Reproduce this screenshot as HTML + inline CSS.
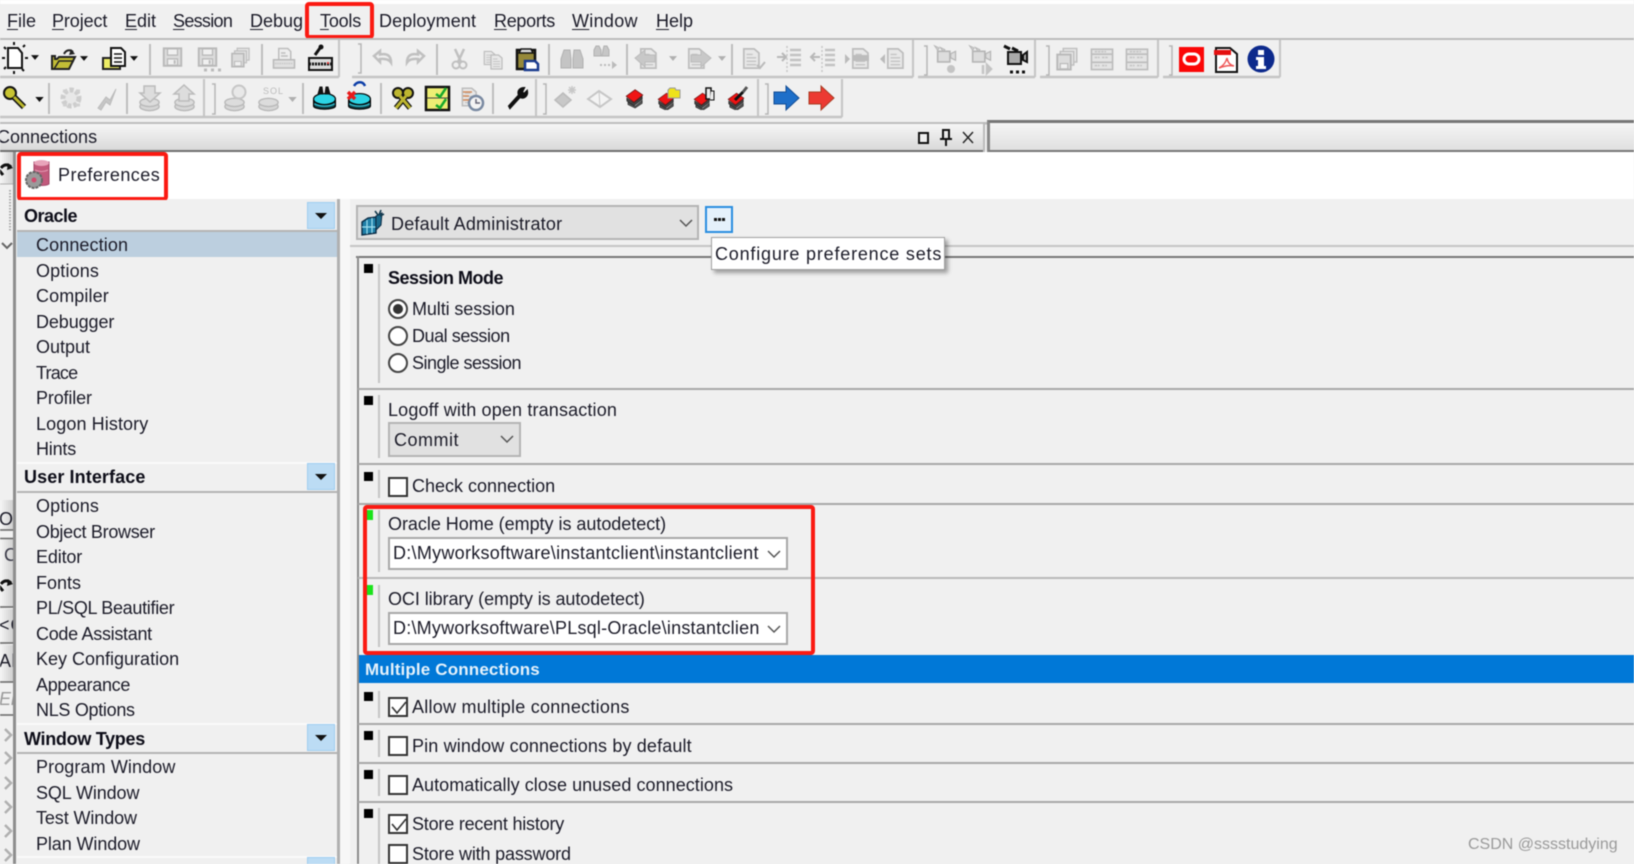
<!DOCTYPE html>
<html><head><meta charset="utf-8"><title>Preferences</title>
<style>
html,body{margin:0;padding:0;background:#f0f0f0}
#r{position:relative;width:1634px;height:864px;overflow:hidden;background:#f0f0f0;font-family:"Liberation Sans",Arial,sans-serif;font-size:18px;color:#1b1b28;filter:blur(.45px)}
#r div,#r svg.a{position:absolute}
.t{white-space:nowrap;line-height:24px;height:24px}
.b{font-weight:bold;color:#0d0d18}
.u{text-decoration:underline;text-underline-offset:2px;text-decoration-thickness:1px}
.h{left:17px;width:320px;height:31px;background:#f0f0f0;border-bottom:2px solid #b4b4b4;box-sizing:border-box}
.dd{left:307px;width:28px;height:27px;background:#bcdcf4;border:1px solid #9fcdf0;box-sizing:border-box}
.dd:after{content:"";position:absolute;left:7px;top:10px;border-left:6px solid transparent;border-right:6px solid transparent;border-top:6px solid #111}
.sq{left:364px;width:9px;height:9px;background:#000}
.gr{left:367px;width:6px;height:10px;background:#1be31b}
.vs{left:378px;width:2px;background:#c4c4c4}
.hl{left:358px;right:0;height:2px;background:#a8a8a8}
.rd{left:388px;width:16px;height:16px;border:2px solid #444;border-radius:50%;background:#fff}
.rd.on:after{content:"";position:absolute;left:3px;top:3px;width:10px;height:10px;border-radius:50%;background:#333}
.cb{left:388px;width:16px;height:16px;border:2px solid #333;background:#fff}
.red{border:4px solid #fb1a12;border-radius:4px;box-sizing:border-box}
.inp{left:388px;width:400px;height:33px;background:#fff;border:2px solid #a8a8a8;box-sizing:border-box}
.sb{position:absolute;left:0;width:13px;background:linear-gradient(90deg,#f6f6f6,#cfcfcf)}
</style></head><body><div id="r">

<div style="left:0;top:0;width:1634px;height:4px;background:#fff"></div>
<div class="t" style="left:7px;top:9px"><span class="u">F</span>ile</div>
<div class="t" style="left:52px;top:9px;letter-spacing:-.1px"><span class="u">P</span>roject</div>
<div class="t" style="left:125px;top:9px"><span class="u">E</span>dit</div>
<div class="t" style="left:173px;top:9px;letter-spacing:-.7px"><span class="u">S</span>ession</div>
<div class="t" style="left:250px;top:9px"><span class="u">D</span>ebug</div>
<div class="t" style="left:320px;top:9px;letter-spacing:-.2px"><span class="u">T</span>ools</div>
<div class="t" style="left:379px;top:9px;letter-spacing:.1px">Deployment</div>
<div class="t" style="left:494px;top:9px;letter-spacing:-.3px"><span class="u">R</span>eports</div>
<div class="t" style="left:572px;top:9px;letter-spacing:.3px"><span class="u">W</span>indow</div>
<div class="t" style="left:656px;top:9px"><span class="u">H</span>elp</div>
<div class="red" style="left:305px;top:2px;width:69px;height:37px"></div>

<svg class="a" style="left:0;top:0" width="1634" height="152" viewBox="0 0 1634 152">
<defs>
<symbol id="floppy" viewBox="0 0 32 32"><path d="M2 2h28v28H2z" fill="#dcdcdc" stroke="#b8b8b8" stroke-width="3"/><path d="M8 3h16v10H8zM8 19h16v10H8z" fill="#f0f0f0" stroke="#b8b8b8" stroke-width="2"/><path d="M18 21h3v6h-3z" fill="#b8b8b8"/></symbol>
<symbol id="floppies" viewBox="0 0 32 32"><path d="M11 2h18v18H11z" fill="#e8e8e8" stroke="#c0c0c0" stroke-width="2"/><path d="M7 6h18v18H7z" fill="#e8e8e8" stroke="#c0c0c0" stroke-width="2"/><path d="M3 10h18v20H3z" fill="#dcdcdc" stroke="#b8b8b8" stroke-width="2.5"/><path d="M7 22h10v7H7z" fill="#f0f0f0" stroke="#b8b8b8" stroke-width="1.5"/></symbol>
<symbol id="printg" viewBox="0 0 32 32"><path d="M9 2h12l4 4v12H9z" fill="#eee" stroke="#bdbdbd" stroke-width="2"/><path d="M12 8h6M12 12h9" stroke="#bdbdbd" stroke-width="2"/><path d="M2 17h28v11H2z" fill="#e0e0e0" stroke="#b8b8b8" stroke-width="2"/><path d="M4 22h24" stroke="#c8c8c8" stroke-width="2" stroke-dasharray="2 1"/></symbol>
<symbol id="db" viewBox="0 0 32 32"><ellipse cx="16" cy="24" rx="14" ry="6" fill="#d6d6d6" stroke="#b8b8b8" stroke-width="2"/><ellipse cx="16" cy="18" rx="14" ry="6" fill="#dcdcdc" stroke="#b8b8b8" stroke-width="2"/></symbol>
<symbol id="dbc" viewBox="0 0 32 32"><path d="M2 19v8c0 2 6 4 14 4s14-2 14-4v-8z" fill="#0d3c42" stroke="#000" stroke-width="1.5"/><path d="M3 24c3 2 8 3 13 3s10-1 13-3" stroke="#2fb6c8" stroke-width="2" fill="none"/><ellipse cx="16" cy="18" rx="14" ry="7" fill="#2cd4e4" stroke="#000" stroke-width="1.5"/></symbol>
<symbol id="doc" viewBox="0 0 32 32"><path d="M7 2h15l7 6v22H7z" fill="#e8e8e8" stroke="#bdbdbd" stroke-width="2.5"/><path d="M11 10h9M11 15h14M11 20h14M11 25h14" stroke="#c4c4c4" stroke-width="2"/></symbol>
<symbol id="redbk" viewBox="0 0 32 32"><path d="M5 23l12 7 12-10v5L17 33 5 27z" fill="#5a5a5a" stroke="#222"/><path d="M3 16l12 8 14-11v5L15 29 3 21z" fill="#444" stroke="#222"/><path d="M2 13 17 2l13 9-15 12z" fill="#f01414" stroke="#6a1414" stroke-width="1.2"/></symbol>
<symbol id="cam" viewBox="0 0 32 32"><path d="M3 2l6 3-2 3zM10 4l6 3-2 3z" fill="#ccc" stroke="#b5b5b5"/><path d="M7 9h15v13H7z" fill="#ddd" stroke="#b5b5b5" stroke-width="2"/><path d="M23 12l6-3v11l-6-3z" fill="#ddd" stroke="#b5b5b5" stroke-width="1.5"/></symbol>
<symbol id="win" viewBox="0 0 32 32"><rect x="3" y="4" width="26" height="25" fill="#e4e4e4" stroke="#bcbcbc" stroke-width="2"/><path d="M3 10h26M3 20h26" stroke="#bcbcbc" stroke-width="2"/><path d="M7 14h6M16 14h8M7 24h6M16 24h6M7 7h14" stroke="#c4c4c4" stroke-width="2" stroke-dasharray="3 1"/></symbol>
<symbol id="drp" viewBox="0 0 10 6"><path d="M0 0h10L5 6z" fill="#111"/></symbol>
<symbol id="drg" viewBox="0 0 10 6"><path d="M0 0h10L5 6z" fill="#b0b0b0"/></symbol>
</defs>
<rect y="38" width="1634" height="2" fill="#bcbcbc"/>
<path d="M0 77h339M352 77h561M918 77h117M1040 77h118M1163 77h117" stroke="#c4c4c4" stroke-width="2.5"/>
<path d="M339 40v37M913 40v37M1035 40v37M1158 40v37M1280 40v37" stroke="#c4c4c4" stroke-width="2"/>
<path d="M0 117h842" stroke="#c4c4c4" stroke-width="2.5"/>
<path d="M204 79v38M536 79v38M758 79v38M842 79v38" stroke="#c4c4c4" stroke-width="2"/>
<rect y="122" width="987" height="2.5" fill="#bdbdbd"/>
<path d="M150 44v31M262 44v31M437 44v31M549 44v31M627 44v31M732 44v31M49 83v31M127 83v31M303 83v31M381 83v31M493 83v31" stroke="#bdbdbd" stroke-width="2"/>
<path d="M358 44h3v29h-3M924 46h3v29h-3M1046 46h3v29h-3M1169 46h3v29h-3M212 84h3v30h-3M543 84h3v30h-3M765 84h3v30h-3" fill="none" stroke="#b5b5b5" stroke-width="1.5"/>

<!-- new doc -->
<path d="M8 48h10l4 5v15H8z" fill="#fff" stroke="#111" stroke-width="2"/>
<path d="M14 42v3M14 71v3M2 58h3M25 58h3M25 45l-2 2M4 47l2 2M4 69l2-2M24 71l-2-2" stroke="#111" stroke-width="2"/>
<use href="#drp" x="31" y="55" width="8" height="5"/>
<!-- open -->
<path d="M52 56v13h17l6-12H59l-2 2h-2v-3z" fill="#c2bd36" stroke="#222" stroke-width="2"/><path d="M54 69l5-8h15" fill="none" stroke="#222" stroke-width="1.5"/>
<path d="M64 54c2-4 6-5 9-2" fill="none" stroke="#222" stroke-width="2"/><path d="M71 49l4 5-6 1z" fill="#222"/>
<use href="#drp" x="80" y="56" width="8" height="5"/>
<!-- doc folder -->
<path d="M103 58h17v11h-17z" fill="#eeee66" stroke="#222" stroke-width="2"/><path d="M111 48h10l4 4v14h-14z" fill="#fff" stroke="#111" stroke-width="2"/><path d="M114 54h8M114 58h8M114 62h8" stroke="#111" stroke-width="1.5"/>
<use href="#drp" x="130" y="56" width="8" height="5"/>
<use href="#floppy" x="162" y="47" width="21" height="20"/>
<use href="#floppy" x="197" y="47" width="21" height="20"/>
<path d="M204 70h3M211 70h3M218 70h3" stroke="#bbb" stroke-width="3"/>
<use href="#floppies" x="230" y="47" width="21" height="21"/>
<use href="#printg" x="272" y="47" width="24" height="24"/>
<!-- print setup -->
<path d="M309 58h23v12h-23z" fill="#dcdcdc" stroke="#111" stroke-width="2"/><path d="M309 64h23" stroke="#111" stroke-width="3" stroke-dasharray="2 1"/><path d="M315 55l5-7" stroke="#111" stroke-width="3"/><circle cx="321" cy="47" r="2.5" fill="#111"/><circle cx="328" cy="63" r="1" fill="#e22"/>
<!-- undo redo -->
<path d="M374 56l6-5v3.500c7-1.500 11 1 11 8-2-3-6-4-11-3.500v3z" fill="none" stroke="#c0c0c0" stroke-width="2.5"/>
<path d="M424 56l-6-5v3.500c-7-1.500-11 1-11 8 2-3 6-4 11-3.500v3z" fill="none" stroke="#c0c0c0" stroke-width="2.5"/>
<!-- scissors -->
<path d="M455 49l6 13M464 49l-6 13" stroke="#c0c0c0" stroke-width="2.5"/><circle cx="456" cy="65" r="3.500" fill="none" stroke="#c0c0c0" stroke-width="2"/><circle cx="463" cy="65" r="3.500" fill="none" stroke="#c0c0c0" stroke-width="2"/>
<use href="#doc" x="481" y="50" width="15" height="16"/><use href="#doc" x="487" y="54" width="17" height="16"/>
<!-- paste -->
<path d="M517 50h18v19h-18z" fill="#96893a" stroke="#111" stroke-width="2.500"/><path d="M521 49h10l2 4h-14z" fill="#ddd" stroke="#111" stroke-width="1.500"/><path d="M525 61h10l3 3v6h-13z" fill="#fff" stroke="#1a3b8e" stroke-width="2.500"/>
<!-- binoc -->
<path d="M561 59l3-9h6l1 9v9h-10zM573 59l1-9h6l3 9v9h-10z" fill="#c4c4c4" stroke="#b0b0b0"/>
<path d="M594 50l2-4h3l2 4v6h-7zM603 50l1-4h3l2 4v6h-7z" fill="#c6c6c6" stroke="#b0b0b0"/><path d="M600 65h12" stroke="#bbb" stroke-width="2" stroke-dasharray="2 2"/><path d="M612 61l5 4-5 4z" fill="#bbb"/>
<!-- back fwd -->
<use href="#doc" x="636" y="47" width="22" height="23"/><path d="M635 58l10-8v5h10v7h-10v5z" fill="#c8c8c8" stroke="#bbb"/>
<use href="#drg" x="669" y="56" width="8" height="5"/>
<use href="#doc" x="684" y="47" width="22" height="23"/><path d="M711 58l-10-8v5h-10v7h10v5z" fill="#c8c8c8" stroke="#bbb"/>
<use href="#drg" x="718" y="56" width="8" height="5"/>
<use href="#doc" x="739" y="47" width="22" height="23"/><path d="M757 65l3 3 5-6" fill="none" stroke="#bbb" stroke-width="2"/>
<path d="M787 46v26" stroke="#c6c6c6" stroke-width="1.500" stroke-dasharray="2 2"/><path d="M790 50h11M790 55h11M790 60h11M790 65h11" stroke="#c2c2c2" stroke-width="2.500"/><path d="M777 57h8M782 53l4 4-4 4" fill="none" stroke="#b8b8b8" stroke-width="2"/>
<path d="M822 46v26" stroke="#c6c6c6" stroke-width="1.500" stroke-dasharray="2 2"/><path d="M825 50h10M825 55h10M825 60h10M825 65h10" stroke="#c2c2c2" stroke-width="2.500"/><path d="M820 57h-8M815 53l-4 4 4 4" fill="none" stroke="#b8b8b8" stroke-width="2"/>
<use href="#doc" x="848" y="47" width="22" height="23"/><path d="M853 55h16v6h-16z" fill="#bcbcbc"/><path d="M845 54l5 5-5 5z" fill="#bbb"/>
<use href="#doc" x="883" y="47" width="22" height="23"/><path d="M885 54l-5 5 5 5z" fill="#bbb"/>
<!-- cameras -->
<use href="#cam" x="932" y="44" width="26" height="26"/><circle cx="951" cy="69" r="4" fill="#c4c4c4"/>
<use href="#cam" x="967" y="44" width="26" height="26"/><path d="M983 65v9M987 65l4 4-4 4z" stroke="#c4c4c4" stroke-width="2.500" fill="#c4c4c4"/>
<path d="M1004 46l6 3M1012 48l6 3" stroke="#111" stroke-width="3"/><path d="M1008 52h13v12h-13zM1023 55l4-3v10l-4-2z" fill="#aaa" stroke="#111" stroke-width="2"/><path d="M1010 72h3M1016 72h3M1022 72h3" stroke="#111" stroke-width="3"/>
<!-- windows -->
<use href="#floppies" x="1055" y="47" width="24" height="24"/>
<use href="#win" x="1089" y="46" width="26" height="26"/>
<use href="#win" x="1124" y="46" width="26" height="26"/>
<!-- oracle -->
<rect x="1179" y="47" width="25" height="25" fill="#fb0606"/><rect x="1184" y="54" width="15" height="10" rx="5" fill="none" stroke="#fff" stroke-width="3"/>
<!-- pdf -->
<path d="M1216 48h14l7 6v18h-21z" fill="#fff" stroke="#111" stroke-width="2"/><rect x="1214" y="50" width="17" height="5" fill="#e41010"/><path d="M1219 68c4-2 7-6 8-10 1 5 3 7 7 8-5-1-10 0-15 2z" fill="none" stroke="#e55" stroke-width="1.500"/>
<!-- info -->
<circle cx="1261" cy="59" r="13.500" fill="#0d2a8c"/><rect x="1258" y="50" width="6" height="5" fill="#fff"/><path d="M1256 57h8v9h2v3h-10v-3h2v-6h-2z" fill="#fff"/>

<!-- row 2 -->
<circle cx="10" cy="93" r="6" fill="#c8c432" stroke="#111" stroke-width="2"/><path d="M14 97l10 10" stroke="#111" stroke-width="6"/><path d="M14 97l10 10" stroke="#bdb82c" stroke-width="3"/>
<use href="#drp" x="35" y="97" width="9" height="5"/>
<circle cx="71" cy="98" r="8" fill="#e8e8e8" stroke="#cdcdcd" stroke-width="5" stroke-dasharray="4 2"/><path d="M63 91h4M76 91h4M63 105h4M76 105h4" stroke="#d0d0d0" stroke-width="3"/>
<path d="M98 108l8-11 4 3 6-11-6 16-4-3-5 8z" fill="#c6c6c6" stroke="#bbb"/>
<use href="#db" x="137" y="90" width="25" height="22"/><path d="M144 86h11v7h5l-10 9-10-9h4z" fill="#ddd" stroke="#bbb" stroke-width="1.500"/>
<use href="#db" x="172" y="90" width="25" height="22"/><path d="M179 101v-7h-5l10-9 10 9h-5v7z" fill="#ddd" stroke="#bbb" stroke-width="1.500"/>
<use href="#db" x="222" y="90" width="25" height="22"/><circle cx="239" cy="92" r="6.500" fill="#e8e8e8" stroke="#c6c6c6" stroke-width="2"/>
<use href="#db" x="256" y="90" width="25" height="22"/><text x="263" y="94" font-family="Liberation Sans,sans-serif" font-size="9" fill="#bbb" letter-spacing="1">SOL</text>
<use href="#drg" x="288" y="97" width="9" height="5"/>
<use href="#dbc" x="312" y="85" width="25" height="25"/><path d="M318 94l2-7h2l1 7zM325 94l1-7h2l2 7z" fill="#111" stroke="#111"/>
<use href="#dbc" x="347" y="85" width="25" height="25"/><path d="M348 92l7 7m0-7l-7 7" stroke="#e81a1a" stroke-width="3.500"/><path d="M354 86c3-5 9-5 11 0" fill="none" stroke="#0c3ea8" stroke-width="2.500"/>
<circle cx="398" cy="93" r="5" fill="#bdb630" stroke="#111" stroke-width="2"/><circle cx="408" cy="93" r="5" fill="#bdb630" stroke="#111" stroke-width="2"/><path d="M400 96l10 12M406 96l-10 12" stroke="#111" stroke-width="5.500"/><path d="M400 96l10 12M406 96l-10 12" stroke="#bdb630" stroke-width="3"/>
<path d="M426 87h23v23h-23z" fill="#eeee74" stroke="#111" stroke-width="2.500"/><path d="M427 98h21" stroke="#444" stroke-width="1"/><path d="M436 94l4 3 6-9M436 105l4 3 6-9" fill="none" stroke="#17a82a" stroke-width="2.500"/>
<use href="#doc" x="458" y="85" width="20" height="24"/><circle cx="476" cy="103" r="7" fill="#f4f4f4" stroke="#7a8aa2" stroke-width="2.500"/><path d="M476 99v4h4" stroke="#667" fill="none" stroke-width="1.500"/><path d="M463 92h9M463 96h6M463 100h6" stroke="#d28a5a" stroke-width="1.500"/>
<path d="M509 106l10-11c-2-4 1-7 5-7l-2 4 2 2 3-3c1 5-3 8-7 6l-10 11z" fill="#111" stroke="#111" stroke-width="2"/>
<path d="M555 100l8-7 8 7-8 7z" fill="#c8c8c8" stroke="#bbb" stroke-width="1.500"/><path d="M572 86v8M568 90h8M569 87l6 6M575 87l-6 6" stroke="#c8c8c8" stroke-width="1.500"/>
<path d="M588 99l11-8 12 8-11 8z" fill="#f4f4f4" stroke="#c6c6c6" stroke-width="2"/><path d="M599 91l1 16" stroke="#c6c6c6" stroke-width="1"/>
<use href="#redbk" x="625" y="87" width="19" height="22"/>
<use href="#redbk" x="657" y="92" width="18" height="18"/><path d="M668 90l2-2h5l1 2h4v8h-12z" fill="#eee21a" stroke="#999"/>
<use href="#redbk" x="693" y="92" width="18" height="18"/><path d="M706 88h5v11h-5z" fill="#eee" stroke="#111" stroke-width="1.500"/><path d="M711 91h3v9h-4" fill="#eee" stroke="#111"/>
<use href="#redbk" x="727" y="92" width="18" height="18"/><path d="M735 100l8-8" stroke="#111" stroke-width="3"/><path d="M743 92l4-5" stroke="#555" stroke-width="3"/>
<path d="M774 92h12v-6l13 12-13 12v-6h-12z" fill="#1e6fc9" stroke="#124c94" stroke-width="1"/>
<path d="M809 92h12v-6l13 12-13 12v-6h-12z" fill="#ec3a32" stroke="#a83c22" stroke-width="1"/>
</svg>

<!-- connections bar -->
<div style="left:0;top:124px;width:983px;height:26px;background:linear-gradient(#f6f6f6,#d9d9d9);border-bottom:2px solid #6f6f6f"></div>
<div style="left:983px;top:122px;width:2px;height:30px;background:#bcbcbc"></div>
<div style="left:987px;top:120px;width:647px;height:32px;box-sizing:border-box;background:linear-gradient(#f5f5f5,#e0e0e0);border-top:3px solid #777;border-left:3px solid #888;border-bottom:2px solid #777"></div>
<div class="t" style="left:-3px;top:125px">Connections</div>
<div style="left:918px;top:132px;width:7px;height:8px;border:2px solid #111;background:#f0f0f0"></div>
<svg class="a" style="left:938px;top:128px" width="40" height="20"><path d="M5 2h6v9H5zM8 11v7M2 11h12" fill="none" stroke="#111" stroke-width="2"/><path d="M25 4l10 11M35 4 25 15" stroke="#222" stroke-width="1.400"/></svg>

<!-- white band -->
<div style="left:16px;top:152px;width:1618px;height:47px;background:#fff"></div>
<svg class="a" style="left:24px;top:158px" width="30" height="32"><path d="M10 4h15v22c-3 2-12 2-15 0z" fill="#c25a7c" stroke="#a24668"/><ellipse cx="17.5" cy="5" rx="7.500" ry="3" fill="#e8a4ba"/><path d="M11 12c4 2 9 2 13 0" stroke="#e39bb2" fill="none"/><circle cx="10" cy="22" r="8" fill="#9a9a9a" stroke="#666" stroke-width="2" stroke-dasharray="3 1"/><circle cx="10" cy="22" r="2.500" fill="#d04a6e"/></svg>
<div class="t" style="left:58px;top:163px;letter-spacing:.47px">Preferences</div>
<div class="red" style="left:17px;top:152px;width:151px;height:49px"></div>

<!-- left strip -->
<div style="left:0;top:152px;width:13px;height:712px;background:#f0f0f0"></div>
<div class="sb" style="top:152px;height:32px"></div>
<div class="sb" style="top:500px;height:30px"></div>
<div class="sb" style="top:539px;height:68px"></div>
<div class="sb" style="top:609px;height:34px"></div>
<div class="sb" style="top:645px;height:37px"></div>
<svg class="a" style="left:0;top:152px" width="13" height="712"><path d="M1 16c3-4 7-4 10-1" fill="none" stroke="#111" stroke-width="3"/><path d="M8 11l5 5-6 2z" fill="#111"/><path d="M-1 18l4 5" stroke="#111" stroke-width="3"/><path d="M0 32h13" stroke="#b0b0b0"/><path d="M10 38v42" stroke="#aaa" stroke-width="2" stroke-dasharray="1.500 1.500"/><path d="M2 91l5 5 5-5" fill="none" stroke="#666" stroke-width="2"/><path d="M1 432c3-4 7-4 10-1" fill="none" stroke="#111" stroke-width="3"/><path d="M8 427l5 5-6 2z" fill="#111"/><path d="M-1 434l4 5" stroke="#111" stroke-width="3"/><path d="M0 378h13M0 386.500h13M0 455h13M0 491h13M0 530h13M0 563h13" stroke="#666" stroke-width="1.500"/><path d="M5 577l6 6-6 6M5 600l6 6-6 6M5 625l6 6-6 6M5 649l6 6-6 6M5 673l6 6-6 6M5 697l6 6-6 6" fill="none" stroke="#b0b0b0" stroke-width="2.500"/></svg>
<div style="left:0;top:500px;width:13px;height:230px;overflow:hidden">
 <div class="t" style="left:-1px;top:7px;letter-spacing:-.4px">Ob</div>
 <div class="t" style="left:4px;top:43px;color:#3a3a48">C</div>
 <div class="t" style="left:-1px;top:113px;letter-spacing:1px">&lt;C</div>
 <div class="t" style="left:-1px;top:149px;letter-spacing:.5px">Al</div>
 <div class="t" style="left:-1px;top:187px;color:#999;font-style:italic">En</div>
</div>
<div style="left:13px;top:152px;width:3px;height:712px;background:#8e8e8e"></div>

<!-- sidebar -->
<div style="left:337px;top:199px;width:3px;height:665px;background:#b0b0b0"></div>
<div style="left:340px;top:199px;width:10px;height:665px;background:#f7f7f7"></div>

<div class="h" style="top:200px;height:32px"></div><div class="t b" style="left:24px;top:204px;letter-spacing:-.5px">Oracle</div><div class="dd" style="top:202px"></div>
<div style="left:17px;top:232px;width:320px;height:25px;background:#bccfdf"></div>
<div class="t" style="left:36px;top:233px;letter-spacing:.1px">Connection</div>
<div class="t" style="left:36px;top:259px;letter-spacing:.15px">Options</div>
<div class="t" style="left:36px;top:284px;letter-spacing:.1px">Compiler</div>
<div class="t" style="left:36px;top:309.5px;letter-spacing:-.1px">Debugger</div>
<div class="t" style="left:36px;top:335px">Output</div>
<div class="t" style="left:36px;top:360.5px;letter-spacing:-.8px">Trace</div>
<div class="t" style="left:36px;top:386px;letter-spacing:-.15px">Profiler</div>
<div class="t" style="left:36px;top:411.5px;letter-spacing:.1px">Logon History</div>
<div class="t" style="left:36px;top:437px;letter-spacing:-.2px">Hints</div>

<div class="h" style="top:462px;border-top:2px solid #fafafa"></div><div class="t b" style="left:24px;top:465px;letter-spacing:.1px">User Interface</div><div class="dd" style="top:463px"></div>
<div class="t" style="left:36px;top:494px;letter-spacing:.15px">Options</div>
<div class="t" style="left:36px;top:519.5px;letter-spacing:-.3px">Object Browser</div>
<div class="t" style="left:36px;top:545px;letter-spacing:-.15px">Editor</div>
<div class="t" style="left:36px;top:570.5px">Fonts</div>
<div class="t" style="left:36px;top:596px;letter-spacing:-.3px">PL/SQL Beautifier</div>
<div class="t" style="left:36px;top:621.5px;letter-spacing:-.3px">Code Assistant</div>
<div class="t" style="left:36px;top:647px">Key Configuration</div>
<div class="t" style="left:36px;top:672.5px;letter-spacing:-.3px">Appearance</div>
<div class="t" style="left:36px;top:698px;letter-spacing:-.3px">NLS Options</div>

<div class="h" style="top:723px;border-top:2px solid #fafafa"></div><div class="t b" style="left:24px;top:726.5px;letter-spacing:-.3px">Window Types</div><div class="dd" style="top:724px"></div>
<div class="t" style="left:36px;top:755px;letter-spacing:.1px">Program Window</div>
<div class="t" style="left:36px;top:780.5px;letter-spacing:-.1px">SQL Window</div>
<div class="t" style="left:36px;top:806px;letter-spacing:-.1px">Test Window</div>
<div class="t" style="left:36px;top:831.5px;letter-spacing:-.1px">Plan Window</div>
<div class="h" style="top:856px;border-top:2px solid #fafafa"></div><div class="dd" style="top:857px"></div>

<!-- preference set combo -->
<div style="left:356px;top:205px;width:343px;height:35px;box-sizing:border-box;background:#e1e1e1;border:2px solid #b4b4b4"></div>
<svg class="a" style="left:360px;top:208px" width="26" height="28"><path d="M2 14l6-4 8-1v16l-14 2z" fill="#1f7fa8" stroke="#0b2b44" stroke-width="1.400"/><path d="M7 12v14M12 10v15M2 19h14" stroke="#9fe0f0" stroke-width="1.200"/><path d="M16 22V8l6-3-1 12z" fill="#1a6a8c" stroke="#0b2b44"/><path d="M15 3l3 4M21 2l-2 5M24 6l-4 2" stroke="#10384c" stroke-width="1.600"/></svg>
<div class="t" style="left:391px;top:212px;letter-spacing:.2px">Default Administrator</div>
<svg class="a" style="left:679px;top:219px" width="14" height="10"><path d="M1 1l6 6 6-6" fill="none" stroke="#555" stroke-width="1.500"/></svg>
<div style="left:705px;top:206px;width:28px;height:27px;box-sizing:border-box;background:#e5f1fb;border:2px solid #2a8ee0"></div>
<div style="left:714px;top:218px;width:3px;height:3px;background:#111;box-shadow:4px 0 #111,8px 0 #111"></div>

<div style="left:350px;top:245px;right:0;height:2px;background:#c4c4c4"></div>
<!-- panel frame -->
<div style="left:356px;top:256px;right:0;height:2px;background:#777"></div>
<div style="left:357px;top:256px;width:2px;height:608px;background:#8c8c8c"></div>

<!-- Session Mode -->
<div class="sq" style="top:264px"></div><div class="vs" style="top:264px;height:119px"></div>
<div class="t b" style="left:388px;top:266px;letter-spacing:-.5px">Session Mode</div>
<div class="rd on" style="top:299px"></div><div class="t" style="left:412px;top:297px;letter-spacing:-.1px">Multi session</div>
<div class="rd" style="top:326px"></div><div class="t" style="left:412px;top:324px;letter-spacing:-.45px">Dual session</div>
<div class="rd" style="top:353px"></div><div class="t" style="left:412px;top:351px;letter-spacing:-.5px">Single session</div>
<div class="hl" style="top:388px"></div>

<!-- Logoff -->
<div class="sq" style="top:396px"></div><div class="vs" style="top:395px;height:63px"></div>
<div class="t" style="left:388px;top:398px;letter-spacing:.15px">Logoff with open transaction</div>
<div style="left:388px;top:422px;width:133px;height:35px;box-sizing:border-box;background:#e1e1e1;border:2px solid #b4b4b4"></div>
<div class="t" style="left:394px;top:428px;letter-spacing:.5px">Commit</div>
<svg class="a" style="left:500px;top:435px" width="14" height="10"><path d="M1 1l6 6 6-6" fill="none" stroke="#555" stroke-width="1.500"/></svg>
<div class="hl" style="top:463px"></div>

<!-- Check connection -->
<div class="sq" style="top:472px"></div><div class="vs" style="top:470px;height:28px"></div>
<div class="cb" style="top:477px"></div><div class="t" style="left:412px;top:474px">Check connection</div>
<div class="hl" style="top:503px"></div>

<!-- Oracle home -->
<div class="gr" style="top:510px"></div><div class="vs" style="top:510px;height:62px"></div>
<div class="t" style="left:388px;top:512px;letter-spacing:-.03px">Oracle Home (empty is autodetect)</div>
<div class="inp" style="top:537px"></div>
<div class="t" style="left:393px;top:541px;width:366px;overflow:hidden;letter-spacing:.28px">D:\Myworksoftware\instantclient\instantclient</div>
<svg class="a" style="left:767px;top:550px" width="14" height="10"><path d="M1 1l6 6 6-6" fill="none" stroke="#555" stroke-width="1.500"/></svg>
<div class="hl" style="top:577px;background:#b8b8b8"></div>

<!-- OCI -->
<div class="gr" style="top:585px"></div><div class="vs" style="top:585px;height:62px"></div>
<div class="t" style="left:388px;top:587px;letter-spacing:-.07px">OCI library (empty is autodetect)</div>
<div class="inp" style="top:612px"></div>
<div class="t" style="left:393px;top:616px;width:366px;overflow:hidden;letter-spacing:.22px">D:\Myworksoftware\PLsql-Oracle\instantclient</div>
<svg class="a" style="left:767px;top:625px" width="14" height="10"><path d="M1 1l6 6 6-6" fill="none" stroke="#555" stroke-width="1.500"/></svg>

<!-- Multiple connections -->
<div style="left:359px;top:655px;right:0;height:28px;background:#0078d7"></div>
<div class="t b" style="left:365px;top:658px;color:#e6f2fb;font-size:17px;letter-spacing:.15px">Multiple Connections</div>
<div class="red" style="left:363px;top:505px;width:452px;height:150px"></div>

<div class="sq" style="top:692px"></div><div class="vs" style="top:691px;height:27px"></div>
<div class="cb" style="top:697px"></div><svg class="a" style="left:391px;top:700px" width="16" height="16"><path d="M1 7l5 6 9-11" fill="none" stroke="#333" stroke-width="1.600"/></svg>
<div class="t" style="left:412px;top:695px;letter-spacing:.25px">Allow multiple connections</div>
<div class="hl" style="top:723px"></div>

<div class="sq" style="top:731px"></div><div class="vs" style="top:730px;height:27px"></div>
<div class="cb" style="top:736px"></div><div class="t" style="left:412px;top:734px;letter-spacing:.14px">Pin window connections by default</div>
<div class="hl" style="top:762px"></div>

<div class="sq" style="top:770px"></div><div class="vs" style="top:769px;height:27px"></div>
<div class="cb" style="top:775px"></div><div class="t" style="left:412px;top:773px;letter-spacing:.05px">Automatically close unused connections</div>
<div class="hl" style="top:801px"></div>

<div class="sq" style="top:809px"></div><div class="vs" style="top:808px;height:56px"></div>
<div class="cb" style="top:814px"></div><svg class="a" style="left:391px;top:817px" width="16" height="16"><path d="M1 7l5 6 9-11" fill="none" stroke="#333" stroke-width="1.600"/></svg>
<div class="t" style="left:412px;top:812px;letter-spacing:-.2px">Store recent history</div>
<div class="cb" style="top:844px"></div><div class="t" style="left:412px;top:842px;letter-spacing:-.17px">Store with password</div>

<!-- tooltip -->
<div style="left:711px;top:237px;width:234px;height:33px;box-sizing:border-box;background:#fff;border:1px solid #a0a0a0;box-shadow:3px 3px 4px rgba(0,0,0,.35)"></div>
<div class="t" style="left:715px;top:242px;letter-spacing:.8px">Configure preference sets</div>

<!-- watermark -->
<div class="t" style="left:1468px;top:833px;font-size:16px;color:#9a9a9a">CSDN @sssstudying</div>
</div></body></html>
